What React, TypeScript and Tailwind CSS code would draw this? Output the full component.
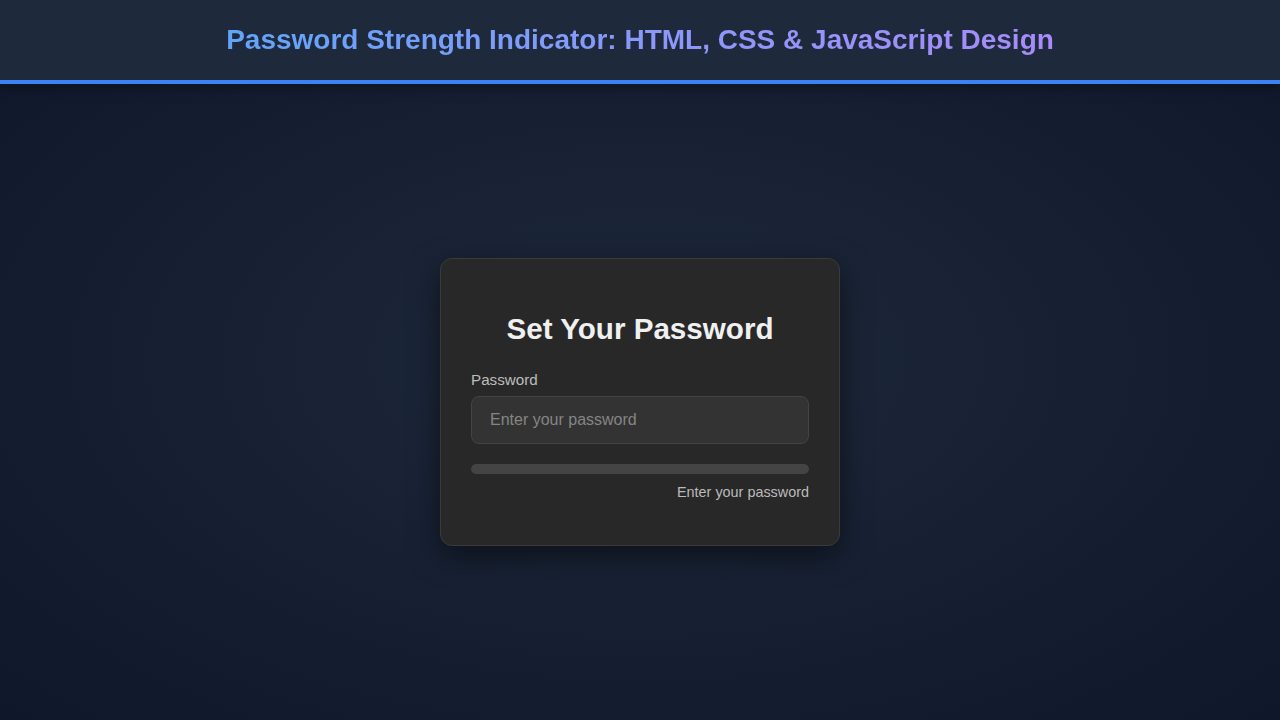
import React, { useState } from 'react';

export default function App() {
  const [password, setPassword] = useState('');

  return (
    <div
      className="min-h-screen flex flex-col bg-[radial-gradient(#1e293b,#0f172a)]"
      style={{ fontFamily: '"Liberation Sans", Arial, sans-serif' }}
    >
      {/* Header */}
      <header className="h-[84px] shrink-0 bg-[#1e293b] border-b-4 border-[#3b82f6] shadow-[0_4px_12px_rgba(0,0,0,0.35)] flex items-center justify-center">
        <h1 className="text-[28px] font-bold leading-8 bg-gradient-to-r from-[#60a5fa] to-[#a78bfa] bg-clip-text text-transparent">
          Password Strength Indicator: HTML, CSS &amp; JavaScript Design
        </h1>
      </header>

      {/* Card */}
      <main className="flex-1 flex items-center justify-center">
        <div className="w-[400px] bg-[#282828] border border-[#3a3a3a] rounded-xl shadow-[0_10px_30px_rgba(0,0,0,0.5)] px-[30px] pt-[30px] pb-[30px]">
          <h2 className="mt-[23px] mb-[25px] text-[29.6px] leading-[34px] font-bold text-center text-[#f0f0f0]">
            Set Your Password
          </h2>
          <label className="block text-[15.2px] leading-[17px] text-[#bdbdbd] mb-2">Password</label>
          <input
            type="password"
            value={password}
            onChange={(e) => setPassword(e.target.value)}
            placeholder="Enter your password"
            className="w-full h-12 px-[18px] rounded-lg bg-[#333333] border border-[#444444] text-[16px] text-[#eeeeee] placeholder:text-[#858585] outline-none"
          />
          <div className="mt-5 h-2.5 rounded-full bg-[#444444]" />
          <p className="mt-2.5 mb-[14px] text-right text-[14.4px] leading-[17px] text-[#bbbbbb]">
            Enter your password
          </p>
        </div>
      </main>
    </div>
  );
}
